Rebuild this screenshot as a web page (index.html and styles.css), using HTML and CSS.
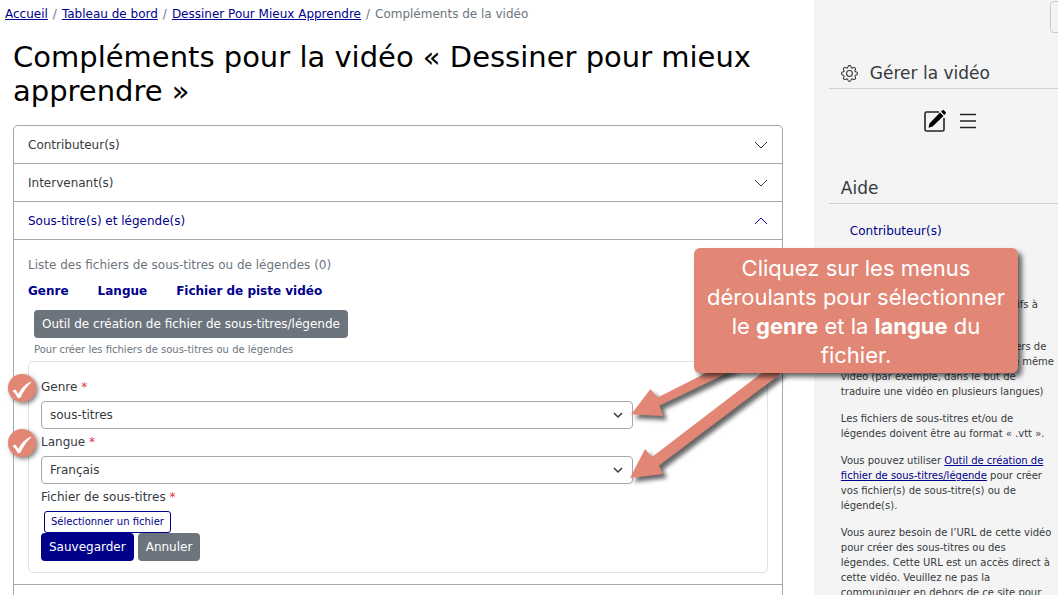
FILE: index.html
```html
<!DOCTYPE html>
<html lang="fr">
<head>
  <meta charset="UTF-8" />
  <meta name="viewport" content="width=device-width, initial-scale=1.0" />
  <title>Compléments de la vidéo</title>
  <link rel="stylesheet" href="styles.css">
</head>
<body>
  <div class="page">
    <main class="content">
      <nav class="breadcrumb">
        <a href="#">Accueil</a>
        <span>/</span>
        <a href="#">Tableau de bord</a>
        <span>/</span>
        <a href="#">Dessiner Pour Mieux Apprendre</a>
        <span>/</span>
        <span>Compléments de la vidéo</span>
      </nav>
      <h1>Compléments pour la vidéo « Dessiner pour mieux apprendre »</h1>

      <div class="accordion">
        <button type="button" class="accordion-button">
          Contributeur(s)
          <svg class="chevron" viewBox="0 0 14 14"><path d="M1 4l6 6 6-6" /></svg>
        </button>
        <button type="button" class="accordion-button">
          Intervenant(s)
          <svg class="chevron" viewBox="0 0 14 14"><path d="M1 4l6 6 6-6" /></svg>
        </button>
        <button type="button" class="accordion-button open">
          Sous-titre(s) et légende(s)
          <svg class="chevron" viewBox="0 0 14 14"><path d="M1 10l6-6 6 6" /></svg>
        </button>
        <div class="accordion-body">
          <table class="tracks">
            <caption>Liste des fichiers de sous-titres ou de légendes (0)</caption>
            <thead>
              <tr>
                <th scope="col">Genre</th>
                <th scope="col">Langue</th>
                <th scope="col">Fichier de piste vidéo</th>
              </tr>
            </thead>
          </table>

          <div class="tool">
            <button type="button" class="btn btn-grey">Outil de création de fichier de sous-titres/légende</button>
            <small>Pour créer les fichiers de sous-titres ou de légendes</small>
          </div>

          <form class="track-form">
            <div class="field">
              <svg class="check" viewBox="0 0 30 30">
                <circle cx="15" cy="15" r="14" />
                <path d="M5.500 18q1.500-1.500 3.200-1.300l2.600 4.300q4-8.500 12.500-12.500l.5.8q-7 6.700-10.800 15.200-1.500 1.200-3 .2-1.500-3.800-5-6.700z" />
              </svg>
              <label for="genre">Genre <b>*</b></label>
              <div class="select">
                <select id="genre">
                  <option>sous-titres</option>
                  <option>légendes</option>
                </select>
                <svg viewBox="0 0 12 12"><path d="M2 4l4 4 4-4" /></svg>
              </div>
            </div>
            <div class="field">
              <svg class="check" viewBox="0 0 30 30">
                <circle cx="15" cy="15" r="14" />
                <path d="M5.500 18q1.500-1.500 3.200-1.300l2.600 4.300q4-8.500 12.500-12.500l.5.8q-7 6.700-10.800 15.200-1.500 1.200-3 .2-1.500-3.800-5-6.700z" />
              </svg>
              <label for="langue">Langue <b>*</b></label>
              <div class="select">
                <select id="langue">
                  <option>Français</option>
                  <option>Anglais</option>
                </select>
                <svg viewBox="0 0 12 12"><path d="M2 4l4 4 4-4" /></svg>
              </div>
            </div>
            <div class="field">
              <label for="fichier">Fichier de sous-titres <b>*</b></label>
              <button type="button" id="fichier" class="btn-file">Sélectionner un fichier</button>
            </div>
            <div class="actions">
              <button type="submit" class="btn btn-blue">Sauvegarder</button>
              <button type="button" class="btn btn-grey">Annuler</button>
            </div>
          </form>
        </div>
      </div>
    </main>

    <aside class="sidebar">
      <div class="sidebar-top">
        <button type="button" class="toggle" aria-label="Menu"></button>
      </div>
      <h2>
        <svg class="gear" viewBox="0 0 16 16">
          <path d="M8 4.754a3.246 3.246 0 1 0 0 6.492 3.246 3.246 0 0 0 0-6.492zM5.754 8a2.246 2.246 0 1 1 4.492 0 2.246 2.246 0 0 1-4.492 0z" />
          <path d="M9.796 1.343c-.527-1.790-3.065-1.790-3.592 0l-.094.319a.873.873 0 0 1-1.255.52l-.292-.16c-1.640-.892-3.433.902-2.540 2.541l.159.292a.873.873 0 0 1-.52 1.255l-.319.094c-1.790.527-1.790 3.065 0 3.592l.319.094a.873.873 0 0 1 .52 1.255l-.16.292c-.892 1.640.901 3.434 2.541 2.540l.292-.159a.873.873 0 0 1 1.255.52l.094.319c.527 1.790 3.065 1.790 3.592 0l.094-.319a.873.873 0 0 1 1.255-.52l.292.16c1.640.893 3.434-.902 2.540-2.541l-.159-.292a.873.873 0 0 1 .52-1.255l.319-.094c1.790-.527 1.790-3.065 0-3.592l-.319-.094a.873.873 0 0 1-.52-1.255l.16-.292c.893-1.640-.902-3.433-2.541-2.540l-.292.159a.873.873 0 0 1-1.255-.52l-.094-.319zm-2.633.283c.246-.835 1.428-.835 1.674 0l.094.319a1.873 1.873 0 0 0 2.693 1.115l.291-.16c.764-.415 1.600.42 1.184 1.185l-.159.292a1.873 1.873 0 0 0 1.116 2.692l.318.094c.835.246.835 1.428 0 1.674l-.319.094a1.873 1.873 0 0 0-1.115 2.693l.16.291c.415.764-.42 1.600-1.185 1.184l-.291-.159a1.873 1.873 0 0 0-2.693 1.116l-.094.318c-.246.835-1.428.835-1.674 0l-.094-.319a1.873 1.873 0 0 0-2.692-1.115l-.292.16c-.764.415-1.600-.42-1.184-1.185l.159-.291A1.873 1.873 0 0 0 1.945 8.930l-.319-.094c-.835-.246-.835-1.428 0-1.674l.319-.094A1.873 1.873 0 0 0 3.060 4.377l-.16-.292c-.415-.764.42-1.600 1.185-1.184l.292.159a1.873 1.873 0 0 0 2.692-1.115l.094-.319z" />
        </svg>
        Gérer la vidéo
      </h2>
      <div class="video-links">
        <a href="#" aria-label="Modifier">
          <svg viewBox="0 0 22 22">
            <path class="line" d="M15 2H2.500Q1 2 1 3.500V19.500Q1 21 2.500 21H18.500Q20 21 20 19.500V8" />
            <path d="M16 2.500l3.500 3.500L8.500 16.500 4.500 17.800 5.500 13.500zM17 1.700l1.500-1.400q.7-.6 1.400 0l1.700 1.700q.6.7 0 1.400L20.300 5z" />
          </svg>
        </a>
        <a href="#" aria-label="Liste">
          <svg viewBox="0 0 22 22"><path class="line" d="M3 4.500h16M3 11h16M3 17.500h16" /></svg>
        </a>
      </div>
      <h2>Aide</h2>
      <div class="help">
        <a class="help-title" href="#">Contributeur(s)</a>
        <a class="help-title" href="#">Intervenant(s)</a>
        <a class="help-title" href="#">Sous-titre(s)</a>
        <p>Tous les fichiers de sous-titres relatifs à cette vidéo.</p>
        <p>Vous pouvez ajouter plusieurs fichiers de sous-titres et/ou légendes pour une même vidéo (par exemple, dans le but de traduire une vidéo en plusieurs langues)</p>
        <p>Les fichiers de sous-titres et/ou de légendes doivent être au format « .vtt ».</p>
        <p>Vous pouvez utiliser <a href="#">Outil de création de fichier de sous-titres/légende</a> pour créer vos fichier(s) de sous-titre(s) ou de légende(s).</p>
        <p>Vous aurez besoin de l’URL de cette vidéo pour créer des sous-titres ou des légendes. Cette URL est un accès direct à cette vidéo. Veuillez ne pas la communiquer en dehors de ce site pour</p>
      </div>
    </aside>

    <!-- tutorial bubble and its two arrows -->
    <div class="callout">
      <svg class="arrows" viewBox="0 0 160 120">
        <path d="M1 48.500L20.500 23l7 8.500L86 2h22L29.500 39.500 33 50z" />
        <path d="M0 112L15 83l7 8L133 6h20L29 99.500l4 8.500z" />
      </svg>
      <p>Cliquez sur les menus déroulants pour sélectionner le <strong>genre</strong> et la <strong>langue</strong> du fichier.</p>
    </div>
  </div>
</body>
</html>
```

FILE: styles.css
```css
* {
  box-sizing: border-box;
}

body {
  margin: 0;
  height: 100vh;
  overflow: hidden;
  background-color: #fff;
  color: #343a40;
  font-family: Verdana, "DejaVu Sans", sans-serif;
  font-size: 12px;
  line-height: 18px;
}

button,
select {
  font: inherit;
}

a {
  color: #00008b;
}

.page {
  position: relative;
  display: grid;
  grid-template-columns: 10fr 3fr;
  height: 100vh;
}

.content {
  display: flex;
  flex-direction: column;
  padding: 5px 31px 0 13px;
}

.breadcrumb {
  display: flex;
  gap: 5px;
  margin-left: -8px;
  color: #6c757d;
}

h1 {
  margin: 17px 0;
  color: #000;
  font-size: 29px;
  font-weight: normal;
  line-height: 34px;
}

/* Accordion */
.accordion {
  flex-grow: 1;
  border: 1px solid #a4a9ad;
  border-bottom: none;
  border-radius: 5px 5px 0 0;
}

.accordion-button {
  display: flex;
  justify-content: space-between;
  align-items: center;
  width: 100%;
  height: 38px;
  padding: 0 14px;
  border: none;
  border-bottom: 1px solid #a4a9ad;
  background: none;
  color: #343a40;
  text-align: left;
}

.accordion-button.open {
  color: #00008b;
}

.chevron {
  width: 14px;
  height: 14px;
  fill: none;
  stroke: currentColor;
}

.accordion-body {
  padding: 16px 14px 11px;
  border-bottom: 1px solid #a4a9ad;
}

.tracks {
  border-collapse: collapse;
}

.tracks caption {
  color: #6c757d;
  text-align: left;
  white-space: nowrap;
}

.tracks th {
  padding: 8px 29px 10px 0;
  color: #00008b;
  text-align: left;
  white-space: nowrap;
}

.tool {
  display: flex;
  flex-direction: column;
  align-items: flex-start;
  padding: 0 6px;
}

.tool small {
  color: #6c757d;
  font-size: 10px;
  line-height: 23px;
}

.btn {
  height: 28px;
  padding: 0 8px;
  border: none;
  border-radius: 4px;
  color: #fff;
}

.btn-grey {
  background-color: #6c757d;
}

.btn-blue {
  background-color: #00008b;
}

/* Form */
.track-form {
  padding: 16px 134px 11px 12px;
  border: 1px solid #dee2e6;
  border-radius: 5px;
}

.field {
  position: relative;
}

.field label {
  display: block;
  padding-bottom: 5px;
}

.field b {
  color: #dc3545;
  font-weight: normal;
}

.select {
  position: relative;
  margin-bottom: 4px;
}

.select select {
  display: block;
  width: 100%;
  height: 28px;
  padding: 0 8px;
  border: 1px solid #a4a9ad;
  border-radius: 4px;
  background-color: #fff;
  color: #343a40;
  appearance: none;
}

.select svg {
  position: absolute;
  top: 8px;
  right: 9px;
  width: 12px;
  height: 12px;
  fill: none;
  stroke: #343a40;
  stroke-width: 1.500;
}

.btn-file {
  display: block;
  height: 22px;
  margin-left: 3px;
  padding: 0 6px;
  border: 1px solid #00008b;
  border-radius: 3px;
  background-color: #fff;
  color: #00008b;
  font-size: 10px;
}

.actions {
  display: flex;
  gap: 4px;
}

.check {
  position: absolute;
  top: -5px;
  left: -34px;
  width: 30px;
  height: 30px;
  overflow: visible;
  fill: #fff;
  filter: drop-shadow(2px 2px 2px rgba(0, 0, 0, 0.5));
}

.check circle {
  fill: #e28776;
}

/* Sidebar */
.sidebar {
  overflow: hidden;
  padding-left: 15px;
  background-color: #f4f4f4;
}

.sidebar-top {
  display: flex;
  justify-content: flex-end;
  height: 58px;
  overflow: hidden;
}

.toggle {
  width: 40px;
  height: 32px;
  margin: 1px -32px 0 0;
  border: 1px solid #c8cbce;
  border-radius: 4px;
  background: none;
}

.sidebar h2 {
  display: flex;
  align-items: center;
  gap: 12px;
  height: 31px;
  margin: 0;
  padding: 0 12px;
  border-bottom: 1px solid #cdcfd1;
  font-size: 17px;
  font-weight: normal;
}

.gear {
  width: 17px;
  height: 17px;
  fill: currentColor;
}

.video-links {
  display: flex;
  gap: 11px;
  padding: 21px 0 41px 95px;
}

.video-links a {
  display: flex;
}

.video-links svg {
  width: 22px;
  height: 22px;
  fill: #000;
}

.video-links .line {
  fill: none;
  stroke: #212529;
  stroke-width: 1.600;
}

.help {
  padding: 18px 1px 0 12px;
  font-size: 10px;
  line-height: 15px;
}

.help-title {
  display: block;
  padding: 0 9px 7px;
  font-size: 12px;
  line-height: 18px;
  text-decoration: none;
}

.help p {
  margin: 0 0 12px;
}

/* Bubble */
.callout {
  position: absolute;
  top: 248px;
  right: 40px;
  width: 324px;
}

.callout p {
  position: relative;
  margin: 0;
  padding: 6px 12px 3px;
  border-radius: 6px;
  background-color: #e28776;
  box-shadow: 4px 4px 5px rgba(0, 0, 0, 0.6);
  color: #fff;
  font-family: Marianne, Inter, sans-serif;
  font-size: 22px;
  line-height: 29px;
  text-align: center;
}

.arrows {
  position: absolute;
  top: 118px;
  left: -64px;
  width: 160px;
  height: 120px;
  overflow: visible;
  fill: #e28776;
  filter: drop-shadow(4px 4px 2px rgba(0, 0, 0, 0.6));
}
```
